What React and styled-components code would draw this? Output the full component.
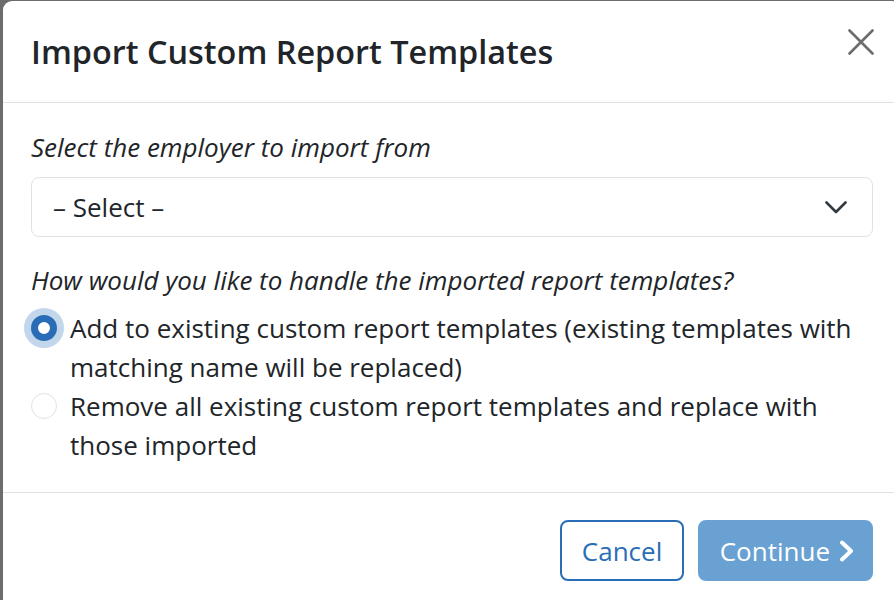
import React, { useState } from 'react';
import styled, { createGlobalStyle } from 'styled-components';

const GlobalStyle = createGlobalStyle`
  html, body {
    margin: 0;
    padding: 0;
    background: #6c6c6c;
    font-family: "Open Sans", "Noto Sans", sans-serif;
    color: #212529;
    overflow: hidden;
  }
`;

const Backdrop = styled.div`
  width: 894px;
  height: 600px;
  padding: 1px 0 0 3px;
  box-sizing: border-box;
  overflow: hidden;
`;

const Dialog = styled.div`
  width: 898px;
  min-height: 640px;
  background: #fff;
  border-radius: 9px 9px 0 0;
  display: flex;
  flex-direction: column;
`;

const Header = styled.div`
  height: 101px;
  display: flex;
  align-items: center;
  justify-content: space-between;
  padding: 0 27px 0 28px;
  border-bottom: 1px solid #dee2e6;
`;

const Title = styled.h1`
  margin: 0;
  font-size: 32.4px;
  font-weight: 600;
  line-height: 1.2;
`;

const CloseButton = styled.button`
  border: 0;
  background: none;
  padding: 0;
  width: 26px;
  height: 26px;
  display: flex;
  cursor: pointer;
  margin-top: -20px;
`;

const Body = styled.div`
  padding: 25px 28px 27px;
  display: flex;
  flex-direction: column;
`;

const FieldLabel = styled.label`
  font-size: 26px;
  font-style: italic;
  line-height: 39px;
  margin-bottom: ${p => p.$gap || 0}px;
`;

const SelectBox = styled.div`
  height: 60px;
  box-sizing: border-box;
  border: 1px solid #dee2e6;
  border-radius: 8px;
  display: flex;
  align-items: center;
  justify-content: space-between;
  padding: 0 25px 0 21px;
  font-size: 26px;
  margin-bottom: 24px;
`;

const RadioRow = styled.label`
  display: flex;
  align-items: flex-start;
  gap: 13px;
  font-size: 26px;
  line-height: 39px;
  cursor: pointer;
`;

const RadioDot = styled.span`
  flex: none;
  width: 26px;
  height: 26px;
  box-sizing: border-box;
  margin: 6px 0 0 0;
  border-radius: 50%;
  border: ${p => (p.$checked ? '7.5px solid #2a6db7' : '1.5px solid #dee2e6')};
  background: #fff;
  box-shadow: ${p => (p.$checked ? '0 0 0 7px #c2d6ec' : 'none')};
`;

const Footer = styled.div`
  border-top: 1px solid #dee2e6;
  padding: 27px 28px 0;
  display: flex;
  justify-content: flex-end;
  gap: 14px;
`;

const Button = styled.button`
  height: 61px;
  box-sizing: border-box;
  border-radius: 8px;
  font-family: "Open Sans", "Noto Sans", sans-serif;
  font-size: 26px;
  display: flex;
  align-items: center;
  gap: 9px;
  cursor: pointer;
  padding: ${p => (p.$primary ? '0 17px 0 20px' : '0 19.5px')};
  border: 2px solid ${p => (p.$primary ? '#6aa1d3' : '#2a6db7')};
  background: ${p => (p.$primary ? '#6aa1d3' : '#fff')};
  color: ${p => (p.$primary ? '#fff' : '#2a6db7')};
`;

const options = [
  'Add to existing custom report templates (existing templates with matching name will be replaced)',
  'Remove all existing custom report templates and replace with those imported',
];

export default function App() {
  const [choice, setChoice] = useState(0);
  return (
    <>
      <GlobalStyle />
      <Backdrop>
        <Dialog>
          <Header>
            <Title>Import Custom Report Templates</Title>
            <CloseButton aria-label="Close">
              <svg width="26" height="26" viewBox="0 0 26 26">
                <path d="M1.5 1.5 L24.5 24.5 M24.5 1.5 L1.5 24.5" stroke="#6c6c6c" strokeWidth="2.6" strokeLinecap="round" />
              </svg>
            </CloseButton>
          </Header>
          <Body>
            <FieldLabel $gap={10}>Select the employer to import from</FieldLabel>
            <SelectBox>
              <span>– Select –</span>
              <svg width="22" height="13" viewBox="0 0 22 13">
                <path d="M1.5 1.5 L11 11 L20.5 1.5" fill="none" stroke="#343a40" strokeWidth="2.6" strokeLinecap="round" strokeLinejoin="round" />
              </svg>
            </SelectBox>
            <FieldLabel $gap={9}>How would you like to handle the imported report templates?</FieldLabel>
            {options.map((text, i) => (
              <RadioRow key={i} onClick={() => setChoice(i)}>
                <RadioDot $checked={choice === i} />
                <span>{text}</span>
              </RadioRow>
            ))}
          </Body>
          <Footer>
            <Button>Cancel</Button>
            <Button $primary disabled>
              Continue
              <svg width="15" height="22" viewBox="0 0 15 22">
                <path d="M3 2.5 L12 11 L3 19.5" fill="none" stroke="#fff" strokeWidth="4" strokeLinecap="round" strokeLinejoin="round" />
              </svg>
            </Button>
          </Footer>
        </Dialog>
      </Backdrop>
    </>
  );
}
